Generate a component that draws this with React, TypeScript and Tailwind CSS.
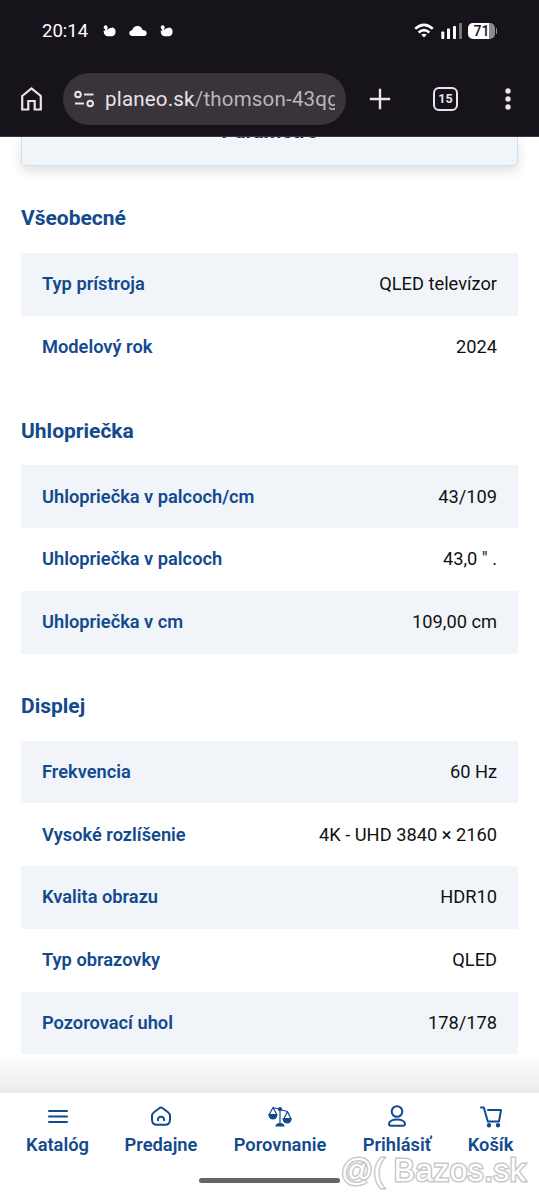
import type { ReactNode } from "react";

type Row = [label: string, value: string];

const sections: { title: string; rows: Row[] }[] = [
  {
    title: "Všeobecné",
    rows: [
      ["Typ prístroja", "QLED televízor"],
      ["Modelový rok", "2024"],
    ],
  },
  {
    title: "Uhlopriečka",
    rows: [
      ["Uhlopriečka v palcoch/cm", "43/109"],
      ["Uhlopriečka v palcoch", "43,0 \" ."],
      ["Uhlopriečka v cm", "109,00 cm"],
    ],
  },
  {
    title: "Displej",
    rows: [
      ["Frekvencia", "60 Hz"],
      ["Vysoké rozlíšenie", "4K - UHD 3840 × 2160"],
      ["Kvalita obrazu", "HDR10"],
      ["Typ obrazovky", "QLED"],
      ["Pozorovací uhol", "178/178"],
    ],
  },
];

function Duck() {
  return (
    <svg className="h-3 w-[13px]" viewBox="0 0 13 12" fill="#fff">
      <circle cx="2.7" cy="2.2" r="1.9" />
      <path d="M1.200 2.500L3.800 2.500L4.300 5Q5.500 2.800 8 3Q9.500 2 10.800 2.900Q12.800 4 12.600 7Q12 11.300 8.500 11.300H4.500Q.8 11 .6 5.500L2.500 5.800Z" />
    </svg>
  );
}

function StatusBar() {
  return (
    <div className="flex h-[62px] items-center pl-[42px] pr-[42px]">
      <span className="w-[48px] whitespace-nowrap text-[18.500px] leading-none text-white">20:14</span>
      <div className="ml-[13px] flex items-center gap-[13px]">
        <Duck />
        <svg className="h-3 w-[18px]" viewBox="0 0 18 12" fill="#fff">
          <path d="M4 11Q.5 11 .3 8.200Q.3 5.500 3.200 5.200Q4.500 1 8.500 1Q12.400 1 13.600 5Q17.500 5 17.700 8.200Q17.700 11 14.500 11Z" />
        </svg>
        <Duck />
      </div>
      <div className="ml-auto flex items-center">
        <svg className="h-[16px] w-[20px]" viewBox="0 0 20 16" fill="none" stroke="#fff" strokeWidth="2.500">
          <path d="M1.200 5.800Q10-2 18.800 5.800M4.600 9.500Q10 4.700 15.400 9.500" />
          <path d="M10 14.500L7.300 11.800Q10 9.800 12.700 11.800Z" fill="#fff" stroke="none" />
        </svg>
        <svg className="ml-[7px] h-[16px] w-[21px]" viewBox="0 0 21 16" fill="#fff">
          <rect x=".3" y="8.500" width="3" height="7.500" rx=".7" />
          <rect x="6" y="5.500" width="3" height="10.500" rx=".7" />
          <rect x="12" y="3" width="3" height="13" rx=".7" />
          <rect x="18" y="0" width="3" height="16" rx=".7" fill="#78747a" />
        </svg>
        <div className="ml-[6px] flex h-4 w-[27px] items-center justify-center rounded-[5px] bg-[linear-gradient(90deg,#fff_78%,#8d898e_78%)] text-[14px] font-medium leading-none text-[#17131a]">71</div>
        <div className="ml-px h-[6px] w-px rounded bg-[#8d898e]" />
      </div>
    </div>
  );
}

function BrowserBar() {
  return (
    <div className="flex items-start pt-[11px]">
      <div className="flex h-[52px] items-center">
        <svg className="ml-[21px] h-6 w-[21px]" viewBox="0 0 21 24" fill="none" stroke="#ece2ec" strokeWidth="2.200">
          <path d="M1.200 9L10.500 1.500L19.800 9V22.500H13.700V14H7.300V22.500H1.200Z" />
        </svg>
        <div className="ml-[21px] flex h-[52px] w-[283px] items-center rounded-full bg-[#39333a]">
          <svg className="ml-[11px] h-[18px] w-[21px]" viewBox="0 0 21 18" fill="none" stroke="#ece2ec" strokeWidth="2">
            <circle cx="4" cy="4.500" r="2.800" />
            <path d="M10 4.500H19.500M1 13.500H10" />
            <circle cx="16.200" cy="13.500" r="2.800" />
          </svg>
          <div className="ml-[10px] w-[230px] overflow-hidden whitespace-nowrap text-[20.500px] leading-[28px] tracking-[0.200px] text-[#bdb4bf]">
            <span className="text-[#ece2ec]">planeo.sk</span>/thomson-43qg
          </div>
        </div>
        <svg className="ml-[23px] h-[22px] w-[22px]" viewBox="0 0 22 22" stroke="#ece2ec" strokeWidth="2.400">
          <path d="M11 .8V21.200M.8 11H21.200" />
        </svg>
        <div className="ml-[42px] flex h-[24px] w-[25px] items-center justify-center rounded-[6px] border-[2.500px] border-[#ece2ec] text-[12.500px] font-bold leading-none text-[#ece2ec]">15</div>
        <svg className="ml-[47px] h-[22px] w-[6px]" viewBox="0 0 6 22" fill="#ece2ec">
          <circle cx="3" cy="3" r="2.700" />
          <circle cx="3" cy="11" r="2.700" />
          <circle cx="3" cy="19" r="2.700" />
        </svg>
      </div>
    </div>
  );
}

function NavItem({ label, width, children }: { label: string; width: string; children: ReactNode }) {
  return (
    <div className={`flex flex-col items-center ${width}`}>
      <svg className="h-6 w-6" viewBox="0 0 24 24" fill="none" stroke="#134a8e" strokeWidth="2" strokeLinecap="round" strokeLinejoin="round">
        {children}
      </svg>
      <span className="mt-[5px] whitespace-nowrap text-[18.300px] font-semibold leading-6">{label}</span>
    </div>
  );
}

function BottomNav() {
  return (
    <nav className="relative flex h-[107.500px] shrink-0 items-start bg-white pt-[11.500px] pl-[18px] text-[#134a8e]">
      <NavItem label="Katalóg" width="w-[79px]">
        <path d="M3 7H21M3 12.500H21M3 18H21" />
      </NavItem>
      <NavItem label="Predajne" width="w-[128px]">
        <path d="M5 8.200L10.300 4.200Q12 3 13.700 4.200L19 8.200Q21 9.700 21 12V15.500Q21 20.800 16 20.800H8Q3 20.800 3 15.500V12Q3 9.700 5 8.200ZM9 16.300C8 11.500 16 11.500 15 16.300" />
      </NavItem>
      <NavItem label="Porovnanie" width="w-[110px]">
        <g strokeWidth="1.200">
          <path d="M5 3.500L19.500 7.500M12 5V21M5 3.500L1.500 10M5 3.500L8.500 10M19.500 7.500L16 14.500M19.500 7.500L22.800 14.500" />
          <path d="M.8 10.500H9Q8.300 15 4.900 15Q1.500 15 .8 10.500ZM15 14.500H23.200Q22.500 19 19.100 19Q15.700 19 15 14.500ZM8 22Q8.500 19.500 12 19.500Q15.500 19.500 16 22Z" fill="#134a8e" />
          <circle cx="12" cy="5.200" r="1.500" fill="#134a8e" />
        </g>
      </NavItem>
      <NavItem label="Prihlásiť" width="w-[124px]">
        <circle cx="12" cy="7.500" r="5.300" />
        <path d="M4 20C4 14 20 14 20 20Q20 21.800 18 21.800H6Q4 21.800 4 20Z" />
      </NavItem>
      <NavItem label="Košík" width="w-[63px]">
        <path d="M2 3.500H4.800L8.800 17.500H20L22 6H9" />
        <circle cx="10" cy="21.300" r="1.200" fill="#134a8e" />
        <circle cx="19" cy="21.300" r="1.200" fill="#134a8e" />
      </NavItem>
      <div className="absolute left-[199px] top-[85px] h-[5px] w-[141px] rounded-full bg-[#656565]" />
      <div className="absolute left-[341px] top-[56px] whitespace-nowrap font-['Liberation_Sans'] text-[31.500px] leading-[42px] tracking-[0.550px] text-white [-webkit-text-stroke:3px_#c8c8c8] [paint-order:stroke_fill]">@( Bazos.sk</div>
    </nav>
  );
}

export default function App() {
  return (
    <div className="flex h-[1200px] w-[539px] flex-col overflow-hidden bg-white font-[Roboto,sans-serif]">
      <header className="h-[137px] shrink-0 border-b border-[#3b383d] bg-[#17131a]">
        <StatusBar />
        <BrowserBar />
      </header>
      <main className="min-h-0 flex-1 overflow-hidden">
        <div className="mx-[21px] h-[28.750px] rounded-b-[5px] border border-t-0 border-[#cfe0ed] bg-[#f1f5fa] shadow-[0_5px_12px_rgba(0,0,0,0.130)]">
          <div className="h-[2px] overflow-hidden">
            <div className="-mt-[18px] text-center text-[20.500px] font-bold leading-6 text-[#16355f]">Parametre</div>
          </div>
        </div>
        {sections.map((section) => (
          <section key={section.title} className="mx-[21px]">
            <h2 className="flex h-[87px] items-center pt-[19px] text-[21px] font-bold text-[#134a8e]">{section.title}</h2>
            <dl>
              {section.rows.map(([label, value]) => (
                <div key={label} className="flex h-[62.750px] items-center justify-between px-[21px] pb-[0.500px] text-[18.250px] odd:bg-[#f1f5fa]">
                  <dt className="font-semibold text-[#134a8e]">{label}</dt>
                  <dd className="text-[#111]">{value}</dd>
                </div>
              ))}
            </dl>
          </section>
        ))}
        <div className="h-[39px] bg-[linear-gradient(180deg,#fff,#ebebeb)]" />
      </main>
      <BottomNav />
    </div>
  );
}
